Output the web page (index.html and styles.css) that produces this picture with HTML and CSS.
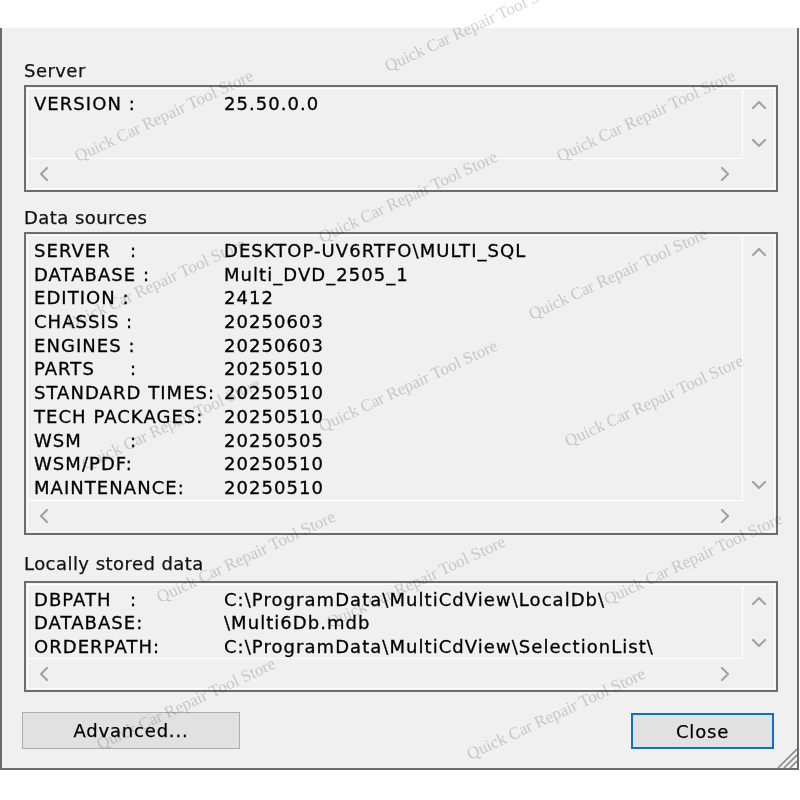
FILE: index.html
```html
<!DOCTYPE html>
<html>
<head>
<meta charset="utf-8">
<link rel="stylesheet" href="styles.css">
</head>
<body>
<div class="dialog">
  <section class="group">
    <div class="group-label">Server</div>
    <div class="listbox lb-server">
      <div class="lb-inner">
        <div class="lb-text">
          <div class="kv"><span>VERSION :</span><span>25.50.0.0</span></div>
        </div>
        <div class="vscroll">
          <svg class="chev-v" viewBox="0 0 14 8"><path d="M1 7 L7 1 L13 7"/></svg>
          <svg class="chev-v" viewBox="0 0 14 8"><path d="M1 1 L7 7 L13 1"/></svg>
        </div>
        <div class="hscroll">
          <svg class="chev-h" viewBox="0 0 8 14"><path d="M7 1 L1 7 L7 13"/></svg>
          <svg class="chev-h" viewBox="0 0 8 14"><path d="M1 1 L7 7 L1 13"/></svg>
        </div>
        <div class="corner"></div>
      </div>
    </div>
  </section>

  <section class="group group-2">
    <div class="group-label">Data sources</div>
    <div class="listbox lb-data">
      <div class="lb-inner">
        <div class="lb-text">
          <div class="kv"><span><span class="kw">SERVER</span>:</span><span>DESKTOP-UV6RTFO\MULTI_SQL</span></div>
          <div class="kv"><span>DATABASE :</span><span>Multi_DVD_2505_1</span></div>
          <div class="kv"><span>EDITION :</span><span>2412</span></div>
          <div class="kv"><span>CHASSIS :</span><span>20250603</span></div>
          <div class="kv"><span>ENGINES :</span><span>20250603</span></div>
          <div class="kv"><span><span class="kw">PARTS</span>:</span><span>20250510</span></div>
          <div class="kv"><span>STANDARD TIMES:</span><span>20250510</span></div>
          <div class="kv"><span>TECH PACKAGES:</span><span>20250510</span></div>
          <div class="kv"><span><span class="kw">WSM</span>:</span><span>20250505</span></div>
          <div class="kv"><span>WSM/PDF:</span><span>20250510</span></div>
          <div class="kv"><span>MAINTENANCE:</span><span>20250510</span></div>
        </div>
        <div class="vscroll">
          <svg class="chev-v" viewBox="0 0 14 8"><path d="M1 7 L7 1 L13 7"/></svg>
          <svg class="chev-v" viewBox="0 0 14 8"><path d="M1 1 L7 7 L13 1"/></svg>
        </div>
        <div class="hscroll">
          <svg class="chev-h" viewBox="0 0 8 14"><path d="M7 1 L1 7 L7 13"/></svg>
          <svg class="chev-h" viewBox="0 0 8 14"><path d="M1 1 L7 7 L1 13"/></svg>
        </div>
        <div class="corner"></div>
      </div>
    </div>
  </section>

  <section class="group group-3">
    <div class="group-label label-3">Locally stored data</div>
    <div class="listbox lb-local">
      <div class="lb-inner">
        <div class="lb-text">
          <div class="kv kv-local"><span><span class="kw">DBPATH</span>:</span><span>C:\ProgramData\MultiCdView\LocalDb\</span></div>
          <div class="kv kv-local"><span>DATABASE:</span><span>\Multi6Db.mdb</span></div>
          <div class="kv kv-local"><span>ORDERPATH:</span><span>C:\ProgramData\MultiCdView\SelectionList\</span></div>
        </div>
        <div class="vscroll">
          <svg class="chev-v" viewBox="0 0 14 8"><path d="M1 7 L7 1 L13 7"/></svg>
          <svg class="chev-v" viewBox="0 0 14 8"><path d="M1 1 L7 7 L13 1"/></svg>
        </div>
        <div class="hscroll">
          <svg class="chev-h" viewBox="0 0 8 14"><path d="M7 1 L1 7 L7 13"/></svg>
          <svg class="chev-h" viewBox="0 0 8 14"><path d="M1 1 L7 7 L1 13"/></svg>
        </div>
        <div class="corner"></div>
      </div>
    </div>
  </section>

  <div class="buttons">
    <button class="btn btn-advanced">Advanced...</button>
    <button class="btn btn-close">Close</button>
  </div>

  <svg class="grip" viewBox="0 0 22 22">
    <path d="M3 22 L22 3" />
    <path d="M9 22 L22 9" />
    <path d="M15 22 L22 15" />
  </svg>
</div>

<div class="watermarks">
  <span class="wm wm1">Quick Car Repair Tool Store</span>
  <span class="wm wm2">Quick Car Repair Tool Store</span>
  <span class="wm wm3">Quick Car Repair Tool Store</span>
  <span class="wm wm4">Quick Car Repair Tool Store</span>
  <span class="wm wm5">Quick Car Repair Tool Store</span>
  <span class="wm wm6">Quick Car Repair Tool Store</span>
  <span class="wm wm7">Quick Car Repair Tool Store</span>
  <span class="wm wm8">Quick Car Repair Tool Store</span>
  <span class="wm wm9">Quick Car Repair Tool Store</span>
  <span class="wm wm10">Quick Car Repair Tool Store</span>
  <span class="wm wm11">Quick Car Repair Tool Store</span>
  <span class="wm wm12">Quick Car Repair Tool Store</span>
  <span class="wm wm13">Quick Car Repair Tool Store</span>
  <span class="wm wm14">Quick Car Repair Tool Store</span>
</div>
</body>
</html>
```

FILE: styles.css
```css
* { box-sizing: border-box; }

html, body {
  margin: 0;
  padding: 0;
  background: #ffffff;
}

body {
  position: relative;
  width: 800px;
  height: 800px;
  overflow: hidden;
  font-family: "DejaVu Sans", "Noto Sans", sans-serif;
  font-size: 18px;
  color: #000;
}

.dialog {
  position: relative;
  margin-top: 28px;
  width: 799px;
  height: 742px;
  background: #f0f0f0;
  border-left: 2px solid #6a6a6a;
  border-right: 2px solid #6a6a6a;
  border-bottom: 2px solid #6a6a6a;
  padding: 33px 0 0 22px;
}

.group-label {
  height: 20px;
  line-height: 20px;
  margin-bottom: 4px;
  color: #111;
  letter-spacing: 0.45px;
  -webkit-text-stroke: 0.25px #111;
}

.group-2 { margin-top: 16px; }
.group-3 { margin-top: 19px; }
.label-3 { margin-bottom: 7px; }

.listbox {
  width: 754px;
  border: 2px solid #6d6d6d;
  padding: 1px;
  background: #f0f0f0;
}

.lb-server { height: 107px; }
.lb-data { height: 303px; }
.lb-local { height: 111px; }

.lb-inner {
  height: 100%;
  border: 1px solid #ffffff;
  display: grid;
  grid-template-columns: 1fr 31px;
  grid-template-rows: 1fr 29px;
}

.lb-data .lb-inner { grid-template-rows: 1fr 30px; }

.lb-text {
  border-right: 1px solid #ffffff;
  border-bottom: 1px solid #ffffff;
  padding: 3px 0 0 6px;
  overflow: hidden;
  white-space: nowrap;
  letter-spacing: 1.05px;
  -webkit-text-stroke: 0.3px #000;
}

.kv {
  display: grid;
  grid-template-columns: 190px auto;
  height: 23.7px;
  line-height: 23.7px;
}

.kv-local {
  height: 23.3px;
  line-height: 23.3px;
}

.kw {
  display: inline-block;
  width: 96px;
}

.vscroll {
  display: flex;
  flex-direction: column;
  justify-content: space-between;
  align-items: center;
  padding: 12px 0 12px 0;
}

.hscroll {
  display: flex;
  justify-content: space-between;
  align-items: center;
  padding: 0 14px 0 12px;
}

.chev-v {
  width: 14px;
  height: 8px;
  overflow: visible;
}

.chev-h {
  width: 8px;
  height: 14px;
  overflow: visible;
}

.chev-v path, .chev-h path {
  fill: none;
  stroke: #a3a3a3;
  stroke-width: 2.2;
  stroke-linecap: round;
  stroke-linejoin: round;
}

.buttons {
  display: flex;
  justify-content: space-between;
  width: 752px;
  margin-top: 20px;
  margin-left: -2px;
}

.btn {
  font-family: inherit;
  font-size: 18px;
  letter-spacing: 0.8px;
  -webkit-text-stroke: 0.25px #000;
  color: #000;
  background: #e1e1e1;
  border: 1px solid #adadad;
  height: 37px;
  padding: 0;
  margin: 0;
}

.btn-advanced { width: 218px; }

.btn-close {
  width: 143px;
  margin-top: 1px;
  height: 36px;
  border: 2px solid #0a6fd0;
}

.grip {
  position: absolute;
  right: 0;
  bottom: 0;
  width: 22px;
  height: 22px;
}

.grip path {
  stroke: #8a8a8a;
  stroke-width: 1.6;
}

.watermarks {
  position: absolute;
  left: 0;
  top: 0;
  width: 800px;
  height: 800px;
  overflow: hidden;
  pointer-events: none;
}

.wm {
  position: absolute;
  white-space: nowrap;
  font-family: "Liberation Serif", serif;
  font-size: 17px;
  line-height: 17px;
  color: #d4d4d4;
  mix-blend-mode: multiply;
  transform-origin: 0 14px;
  transform: rotate(-25deg);
}

.wm1 { left: 78px; top: 148px; }
.wm2 { left: 388px; top: 58px; }
.wm3 { left: 560px; top: 148px; }
.wm4 { left: 322px; top: 229px; }
.wm5 { left: 70px; top: 316px; }
.wm6 { left: 532px; top: 306px; }
.wm7 { left: 322px; top: 418px; }
.wm8 { left: 85px; top: 456px; }
.wm9 { left: 568px; top: 433px; }
.wm10 { left: 160px; top: 589px; }
.wm11 { left: 330px; top: 614px; }
.wm12 { left: 100px; top: 736px; }
.wm13 { left: 470px; top: 746px; }
.wm14 { left: 607px; top: 591px; }
```
